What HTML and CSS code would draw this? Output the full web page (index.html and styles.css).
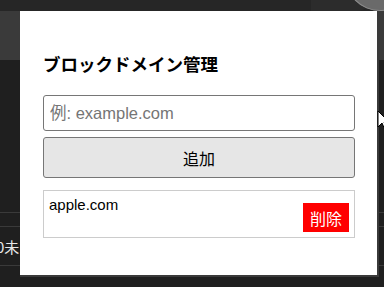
FILE: index.html
```html
<!DOCTYPE html>
<html lang="ja">
<head>
<meta charset="UTF-8">
<meta name="viewport" content="width=device-width, initial-scale=1.0">
<title>ブロックドメイン管理</title>
<link rel="stylesheet" href="styles.css">
</head>
<body>

<div class="browser">
    <div class="tabbar">
        <div class="tab-shade"></div>
        <div class="avatar"></div>
    </div>
    <div class="toolbar"></div>
    <div class="page">
        <div class="page-blank"></div>
        <div class="page-row"></div>
        <div class="page-row tall"><span>0未</span></div>
    </div>
</div>

<div class="popup">
    <h1>ブロックドメイン管理</h1>
    <input type="text" id="domain" placeholder="例: example.com">
    <button id="add">追加</button>
    <ul class="domain-list" id="list">
        <li>
            <span class="domain">apple.com</span>
            <button class="delete">削除</button>
        </li>
    </ul>
</div>

<svg class="cursor" width="12" height="22" viewBox="0 0 12 22">
    <path d="M1 1 L1 17 L5 13 L8 20 L10 19 L7 12 L12 12 Z" fill="#fff" stroke="#000" stroke-width="1"/>
</svg>

</body>
</html>
```

FILE: styles.css
```css
body {
    margin: 0;
    width: 384px;
    height: 287px;
    overflow: hidden;
    background: #1e1e1e;
    font-family: "Liberation Sans", Arial, "Noto Sans CJK JP", sans-serif;
    position: relative;
}
.browser {
    display: flex;
    flex-direction: column;
    height: 287px;
}
.tabbar {
    height: 11px;
    background: #262626;
    display: flex;
    overflow: hidden;
}
.tab-shade {
    margin-left: auto;
    width: 60px;
    height: 30px;
    margin-top: -19px;
    border-radius: 0 0 14px 0;
    background: #2c2c2c;
}
.avatar {
    width: 70px;
    height: 70px;
    flex-shrink: 0;
    margin-top: -59px;
    margin-right: -31px;
    margin-left: -26px;
    border-radius: 50%;
    background: #6a6a6a;
    box-shadow: inset 0 0 0 1px #8c8c8c;
}
.toolbar {
    height: 49px;
    background: #3a3a3a;
}
.page {
    flex: 1;
    background: #1f1f1f;
}
.page-blank {
    height: 152px;
    border-bottom: 1px solid #3a3a3a;
}
.page-row {
    height: 13px;
    border-bottom: 1px solid #3a3a3a;
}
.page-row.tall {
    height: 38px;
    display: flex;
    align-items: center;
    color: #e8e8e8;
    font-size: 15px;
    font-family: "Noto Sans CJK JP", sans-serif;
}
.page-row.tall span {
    margin-left: -4px;
}
.popup {
    position: absolute;
    left: 20px;
    top: 11px;
    width: 357px;
    height: 264px;
    box-sizing: border-box;
    padding: 41px 22px 0 23px;
    background: #fff;
    box-shadow: 1px 1px 0 1px #3a3a3a;
}
h1 {
    margin: 0 0 19px;
    font-size: 17.5px;
    line-height: 24px;
    font-weight: bold;
    color: #000;
    font-family: "Noto Sans CJK JP", sans-serif;
}
#domain {
    display: block;
    width: 100%;
    height: 36px;
    box-sizing: border-box;
    margin: 0;
    padding: 0 6px;
    border: 1px solid #767676;
    border-radius: 3px;
    font-size: 16.5px;
    font-family: "Liberation Sans", Arial, "Noto Sans CJK JP", sans-serif;
}
#domain::placeholder {
    color: #757575;
}
#add {
    display: block;
    width: 100%;
    height: 41px;
    margin-top: 6px;
    border: 1px solid #767676;
    border-radius: 3px;
    background: #e6e6e6;
    color: #000;
    font-size: 16px;
    font-family: "Noto Sans CJK JP", sans-serif;
}
.domain-list {
    list-style: none;
    margin: 12px 0 0;
    padding: 0;
}
.domain-list li {
    display: flex;
    justify-content: space-between;
    align-items: flex-start;
    min-height: 36px;
    padding: 5px;
    border: 1px solid #ccc;
}
.domain {
    font-size: 15px;
    color: #000;
}
.delete {
    align-self: flex-end;
    height: 29px;
    padding: 0 7px;
    border: none;
    border-radius: 0;
    background: #ff0000;
    color: #fff;
    font-size: 16px;
    font-family: "Noto Sans CJK JP", sans-serif;
}
.cursor {
    position: absolute;
    left: 377px;
    top: 110px;
}
```
